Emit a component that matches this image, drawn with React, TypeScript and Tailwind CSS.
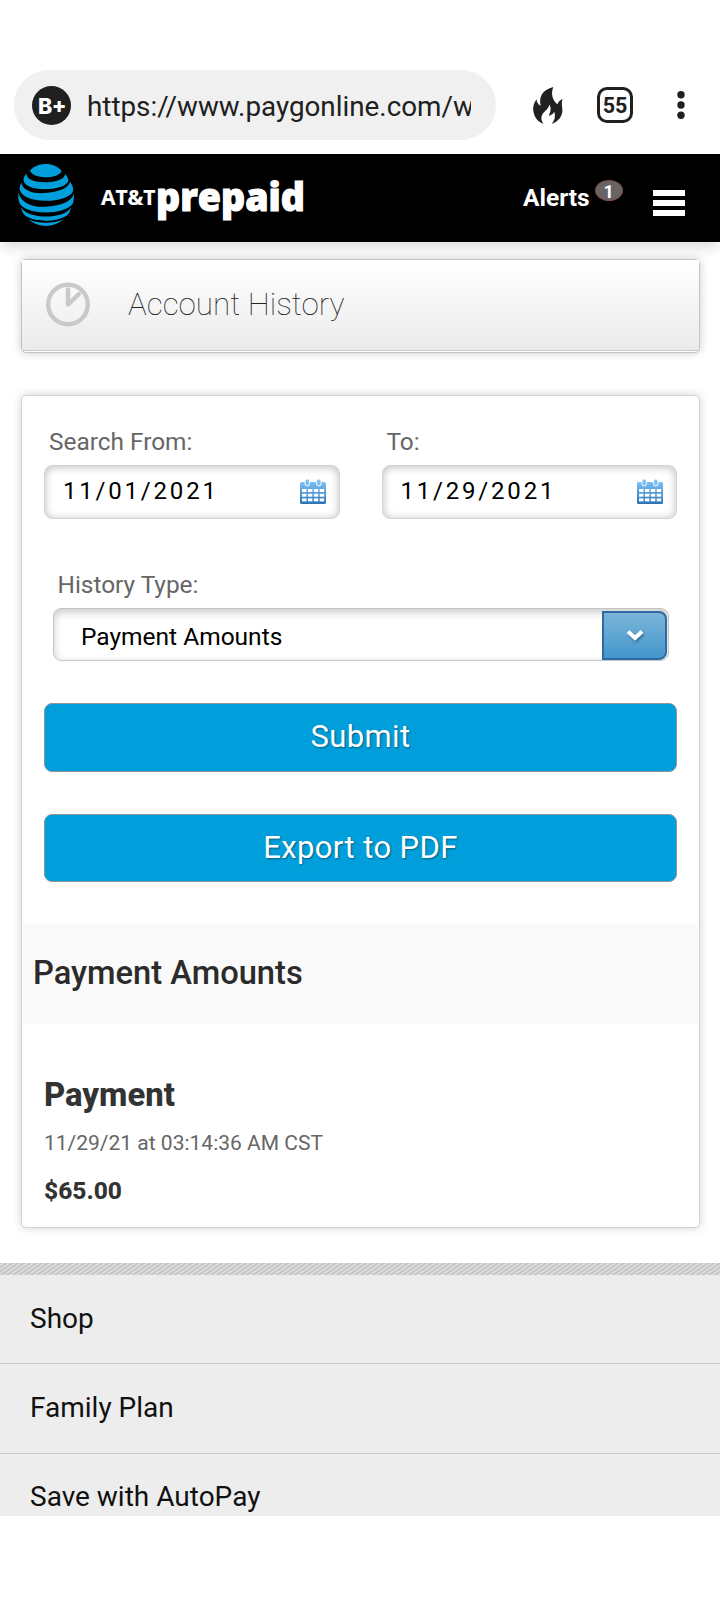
import { useState } from 'react'

const links = ['Shop', 'Family Plan', 'Save with AutoPay']

function Flame() {
  return (
    <svg viewBox="0 0 30 37" className="h-[37px] w-[30px] shrink-0" fill="#202020">
      <path d="M20.3 0C10 2.7 5.5 9 7.7 18.8C5.2 17.600 3.800 15.500 3.600 12.300C1 15.700 0 19.500 .2 22.500C.5 29.500 5 35.200 10.400 36.700C7.400 32 7.800 28.300 11.500 24.700C14.500 21.800 16.200 20.200 16.200 17.600C18.300 20.500 18 24.500 15.700 28.700C18.500 28.300 20.300 26.700 21.200 24.700C22.800 29.500 21.600 33.600 18.500 37C25.300 34.700 29.300 29.600 29.400 23.500C29.400 19.200 28 16.200 29.700 11.700C26.700 13.200 25.200 14.700 24.500 17.300C20.200 14 17.300 7.700 20.300 0Z" />
    </svg>
  )
}

function Globe() {
  return (
    <svg viewBox="0 0 56 62" className="h-[62px] w-14 shrink-0" fill="#009fdb">
      <path d="M12 6.500C16 2 22 0 28 0S40 2.500 43.700 7C42.500 10.500 36 13.300 28 13.300S13 10.500 12 6.500Z" />
      <path d="M8.500 9.500C8 15.500 17 18.500 29 18.200C39 17.900 47 15 47 10C50 13 51 16 50 18C47 22.500 38 25.200 27 25.200C14 25.200 5 21.500 5.500 15C6 12.800 7 11 8.500 9.500Z" />
      <path d="M3.500 18.500C4 26 14 30 27 29C40 28 51 24.500 52 17.500C55 22 56 26 54.500 28.500C51 33.500 40 37 27 36.800C12 36.500 2 32 1.500 24C2 22 2.700 20 3.500 18.500Z" />
      <path d="M.2 28.500C3 38.500 14 43.500 27 42.800C42 42 54 38 55.800 29.500C56.200 34 55.800 37.500 54.500 40C50 45.500 40 48.500 28 48.500C14 48.500 4 44.500 1.500 39C.3 36 0 32 .2 28.500Z" />
      <path d="M2.800 43.500C8 50 17 52.500 28 52.500C39 52.500 48 50 53.200 43.500C52.300 47 50.800 50 49 51.500C43.500 55 36.500 56.700 28 56.700C19.500 56.700 12 55 7 51.500C5 49.500 3.800 47 2.800 43.500Z" />
      <path d="M10.500 55.300C16 57.900 22 58.700 28 58.700S40 57.900 45.500 55.300C40 60 34 62 28 62S16 60 10.500 55.300Z" />
    </svg>
  )
}

function CalendarIcon() {
  return (
    <svg viewBox="0 0 26 25" className="-mt-[2px] h-[25px] w-[26px] shrink-0">
      <defs>
        <linearGradient id="cal" x1="0" y1="0" x2="0" y2="1">
          <stop offset="0" stopColor="#7fc0f7" />
          <stop offset="1" stopColor="#2772b4" />
        </linearGradient>
      </defs>
      <rect x="0" y="3" width="26" height="22" rx="1.5" fill="url(#cal)" />
      <rect x="5" y="0" width="4.500" height="7" rx="2.200" fill="#7fc0f7" stroke="#fff" strokeWidth=".9" />
      <rect x="16.500" y="0" width="4.500" height="7" rx="2.200" fill="#7fc0f7" stroke="#fff" strokeWidth=".9" />
      {[10, 14.7, 19.4].map(y =>
        [2, 7.900, 13.800, 19.700].map(x => (
          <rect key={`${x}-${y}`} x={x} y={y} width="4.500" height="3" fill="#fff" />
        )),
      )}
    </svg>
  )
}

interface DateFieldProps {
  label: string
  value: string
  onChange: (value: string) => void
}

function DateField({ label, value, onChange }: DateFieldProps) {
  return (
    <label className="block min-w-0 flex-1">
      <span className="block h-[28px] pl-[5px] text-[24.4px] leading-[28px] text-[#666]">{label}</span>
      <span className="mt-[9px] flex h-[54px] items-center rounded-[8px] border border-[#d5d5d5] pr-[13px] pl-[18px] shadow-[inset_0_1px_8px_rgba(0,0,0,0.27)]">
        <input
          value={value}
          onChange={e => onChange(e.target.value)}
          className="-mt-[2px] w-0 min-w-0 flex-1 text-[24px] leading-[28px] tracking-[2.8px] text-black outline-none"
        />
        <CalendarIcon />
      </span>
    </label>
  )
}

export default function App() {
  const [from, setFrom] = useState('11/01/2021')
  const [to, setTo] = useState('11/29/2021')

  return (
    <div className="flex h-[1600px] w-[720px] flex-col overflow-hidden bg-white pt-[70px] font-['Roboto',sans-serif]">
      {/* Browser bar */}
      <div className="flex h-[84px] shrink-0 items-start pl-[14px]">
        <div className="flex h-[70px] w-[482px] items-center rounded-full bg-[#f0f0f0] pl-[18px]">
          <svg viewBox="0 0 39 39" className="h-[39px] w-[39px] shrink-0">
            <circle cx="19.500" cy="19.500" r="19.500" fill="#202020" />
            <text x="6" y="27.600" fill="#fff" fontFamily="Inter" fontWeight="800" fontSize="21.500" textLength="28.500">B+</text>
          </svg>
          <span className="mt-[3px] ml-4 w-[384px] overflow-hidden text-[27.8px] leading-[36px] whitespace-nowrap text-[#202020]">
            https://www.paygonline.com/w
          </span>
        </div>
        <div className="flex h-[70px] items-center pl-[37px]">
          <Flame />
          <div className="ml-[34px] flex h-9 w-9 items-center justify-center rounded-[10px] border-[3px] border-[#202020] pt-[2px] text-[21.5px] font-bold text-[#202020]">
            55
          </div>
          <svg viewBox="0 0 8 28" className="ml-[44px] h-7 w-2" fill="#202020">
            <circle cx="4" cy="3.700" r="3.700" />
            <circle cx="4" cy="14" r="3.700" />
            <circle cx="4" cy="24.300" r="3.700" />
          </svg>
        </div>
      </div>

      {/* Site header */}
      <header className="flex h-[88px] shrink-0 items-start bg-black pl-[18px] shadow-[0_8px_12px_-2px_rgba(0,0,0,0.13)]">
        <div className="pt-[10px]">
          <Globe />
        </div>
        <svg viewBox="0 0 216 60" className="mt-4 ml-[26px] h-[60px] w-[216px] shrink-0" fill="#fff" stroke="#fff">
          <text x="1" y="34.700" fontFamily="Open Sans" fontWeight="700" fontSize="21.500" textLength="54.500" lengthAdjust="spacingAndGlyphs" strokeWidth=".2">AT&amp;T</text>
          <text x="56" y="40.700" fontFamily="Open Sans" fontWeight="800" fontSize="39.500" textLength="149" lengthAdjust="spacingAndGlyphs" strokeWidth="1.1">prepaid</text>
        </svg>
        <span className="mt-[30px] ml-[207px] text-[24.5px] leading-[28px] font-bold text-white">Alerts</span>
        <span className="mt-[26px] ml-[5px] flex h-[21px] w-7 items-center justify-center rounded-[50%] border border-[#7d4c48] bg-[#686464] pt-px text-[18px] font-bold text-white">
          1
        </span>
        <div className="mt-9 ml-[30px] flex w-8 flex-col gap-1">
          <span className="h-[6px] bg-white" />
          <span className="h-[6px] bg-white" />
          <span className="h-[6px] bg-white" />
        </div>
      </header>

      {/* Page title */}
      <div className="mt-[17px] mr-5 ml-[21px] h-[94px] shrink-0 rounded-[5px] border border-[#c4c4c4] bg-white pb-px shadow-[0_0_10px_rgba(0,0,0,0.2)]">
        <div className="flex h-[91px] items-center border-b border-[#c8c8c8] bg-linear-to-b from-white to-[#ebebeb] pl-[24px]">
          <svg viewBox="0 0 44 45" className="-mt-px h-[45px] w-11" fill="none" stroke="#c9c9c9">
            <circle cx="22" cy="22.500" r="19.800" strokeWidth="4.400" />
            <path d="M22 7.500V22.500L33 12" strokeWidth="4.400" strokeLinecap="round" strokeLinejoin="round" />
          </svg>
          <h1 className="ml-[38px] text-[31.4px] leading-[36px] font-thin text-[#222]">Account History</h1>
        </div>
      </div>

      {/* Search form and results */}
      <section className="mt-[42px] mr-5 ml-[21px] flex h-[833px] shrink-0 flex-col rounded-[5px] border border-[#d3d3d3] bg-white px-[22px] pt-[32px] shadow-[0_0_10px_rgba(0,0,0,0.18)]">
        <div className="flex gap-[42px]">
          <DateField label="Search From:" value={from} onChange={setFrom} />
          <DateField label="To:" value={to} onChange={setTo} />
        </div>

        <p className="mt-[52px] ml-[13.5px] text-[24.4px] leading-[28px] text-[#666]">History Type:</p>
        <button className="mt-[9px] mr-2 ml-[9px] flex h-[53px] shrink-0 items-center justify-between rounded-[8px] border border-[#c6c6c6] pt-[2px] pr-px pl-[27px] shadow-[inset_0_3px_8px_rgba(0,0,0,0.22)]">
          <span className="mt-[3px] text-[24.5px] leading-[28px] text-black">Payment Amounts</span>
          <span className="flex h-[49px] w-[65px] items-center justify-center rounded-r-[8px] border-2 border-[#2f6aa3] bg-linear-to-b from-[#7ab5d9] to-[#4296cc]">
            <svg viewBox="0 0 18 13" className="h-[13px] w-[18px] drop-shadow-[1px_2px_1px_rgba(0,0,0,0.3)]" fill="none" stroke="#fff" strokeWidth="4">
              <path d="M2 2.500L9 9L16 2.500" />
            </svg>
          </span>
        </button>

        <button className="mt-[42px] h-[69px] shrink-0 rounded-[8px] border border-[#8f9499] bg-[#009fdb] pb-px text-[31px] tracking-[0.4px] text-white [text-shadow:1px_1px_2px_rgba(0,0,0,0.4)]">
          Submit
        </button>
        <button className="mt-[42px] h-[68px] shrink-0 rounded-[8px] border border-[#8f9499] bg-[#009fdb] text-[31px] tracking-[0.4px] text-white [text-shadow:1px_1px_2px_rgba(0,0,0,0.4)]">
          Export to PDF
        </button>

        <h2 className="-mx-[21px] mt-[42px] h-[100px] shrink-0 bg-[#fafafa] pl-[10px] text-[32.7px] leading-[98px] font-medium text-[#2b2b2b]">
          Payment Amounts
        </h2>
        <h3 className="mt-[51px] text-[32.8px] leading-[40px] font-extrabold text-[#333]">Payment</h3>
        <p className="mt-[14px] text-[21px] leading-[28px] text-[#666]">11/29/21 at 03:14:36 AM CST</p>
        <p className="mt-5 text-[24.5px] leading-[28px] font-extrabold text-[#333]">$65.00</p>
      </section>

      {/* Footer links */}
      <footer className="mt-[35px] h-[253px] shrink-0 overflow-hidden bg-[#ededed]">
        <div className="h-3 bg-[#dcdcdc] bg-[repeating-linear-gradient(145deg,#b9b9b9_0px,#dcdcdc_1.5px,#dcdcdc_2.2px,#c4c4c4_3.44px)]" />
        <nav>
          {links.map(link => (
            <a key={link} href="#" className="block h-[89px] border-b border-[#c8c8c8] pl-[30px] text-[28px] leading-[88px] text-[#111] nth-2:h-[90px] nth-3:leading-[86px]">
              {link}
            </a>
          ))}
        </nav>
      </footer>
    </div>
  )
}
